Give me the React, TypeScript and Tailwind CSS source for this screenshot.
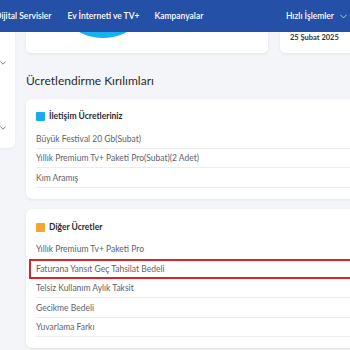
import React from "react";

const Chevron = ({ className = "" }: { className?: string }) => (
  <svg viewBox="0 0 10 6" className={className} fill="none" stroke="currentColor" strokeWidth="1.3" strokeLinecap="round" strokeLinejoin="round">
    <path d="M1 1l4 4 4-4" />
  </svg>
);

const Row = ({ text }: { text: string }) => (
  <div className="h-[19.5px] ml-[10px] flex items-center border-b border-[#ececef] text-[8.5px] text-[#62626c]">
    <span className="pt-[2px]">{text}</span>
  </div>
);

export default function App() {
  return (
    <div
      className="w-[350px] h-[350px] overflow-hidden bg-[#f4f5f8] relative"
      style={{ fontFamily: "Lato, 'Open Sans', sans-serif" }}
    >
      <div className="h-[32px] bg-[#2450a8] flex items-center text-white text-[8.5px] font-semibold relative z-10 whitespace-nowrap">
        <span className="-ml-[5px]">Dijital Servisler</span>
        <span className="ml-[16px]">Ev İnterneti ve TV+</span>
        <span className="ml-[15px]">Kampanyalar</span>
        <span className="ml-auto text-[8.5px]">Hızlı İşlemler</span>
        <Chevron className="w-[7px] h-[5px] ml-[6px] mr-[3px] text-[#c9d4ee]" />
      </div>

      <div className="flex">
        <div className="w-[15px] h-[116px] bg-white rounded-br-[6px] shadow-[0_1px_3px_rgba(0,0,0,0.06)] flex flex-col items-end text-[#555]">
          <Chevron className="w-[6px] h-[4px] mt-[29px] mr-[9px]" />
          <Chevron className="w-[6px] h-[4px] mt-[61px] mr-[9px]" />
        </div>

        <div className="ml-[11px] w-[360px] shrink-0">
          <div className="flex gap-[12px]">
            <div className="w-[242px] h-[21px] bg-white rounded-b-[5px] shadow-[0_1px_3px_rgba(0,0,0,0.08)] relative overflow-hidden">
              <div className="absolute left-[27px] -top-[94px] w-[100px] h-[100px] rounded-full bg-[#1ab0ef]" />
            </div>
            <div className="flex-1 h-[21px] bg-white rounded-bl-[5px] shadow-[0_1px_3px_rgba(0,0,0,0.08)] pl-[10px] text-[7.5px] font-bold text-[#333] whitespace-nowrap">
              <div className="pt-[1px] leading-[10px]">25 Şubat 2025</div>
            </div>
          </div>

          <div className="mt-[20px] h-[16px] text-[12px] text-[#2b2b33] leading-[16px]">
            Ücretlendirme Kırılımları
          </div>

          <div className="mt-[10px] bg-white rounded-[6px] shadow-[0_1px_3px_rgba(0,0,0,0.08)] pt-[10px] pb-[11px]">
            <div className="h-[14px] ml-[10px] flex items-center gap-[4px]">
              <div className="w-[9px] h-[9px] bg-[#17acf0] rounded-[1px]" />
              <span className="text-[8.5px] font-bold text-[#2b2b33]">İletişim Ücretleriniz</span>
            </div>
            <div className="mt-[6px]">
              <Row text="Büyük Festival 20 Gb(Subat)" />
              <Row text="Yıllık Premium Tv+ Paketi Pro(Subat)(2 Adet)" />
              <Row text="Kım Aramış" />
            </div>
          </div>

          <div className="mt-[10.5px] bg-white rounded-[6px] shadow-[0_1px_3px_rgba(0,0,0,0.08)] pt-[11px] pb-[11px]">
            <div className="h-[14px] ml-[10px] flex items-center gap-[4px]">
              <div className="w-[9px] h-[9px] bg-[#f7a530] rounded-[1px]" />
              <span className="text-[8.5px] font-bold text-[#2b2b33]">Diğer Ücretler</span>
            </div>
            <div className="mt-[5px]">
              <div className="h-[19.5px] ml-[10px] flex items-center text-[8.5px] text-[#62626c]">
                <span className="pt-[2px]">Yıllık Premium Tv+ Paketi Pro</span>
              </div>
              <div className="h-[20px] ml-[3px] pl-[5px] flex items-center border-2 border-[#d8242c] text-[8.5px] text-[#62626c]">
                <span className="pt-[1px]">Faturana Yansıt Geç Tahsilat Bedeli</span>
              </div>
              <Row text="Telsiz Kullanım Aylık Taksit" />
              <Row text="Gecikme Bedeli" />
              <Row text="Yuvarlama Farkı" />
            </div>
          </div>
        </div>
      </div>
    </div>
  );
}
